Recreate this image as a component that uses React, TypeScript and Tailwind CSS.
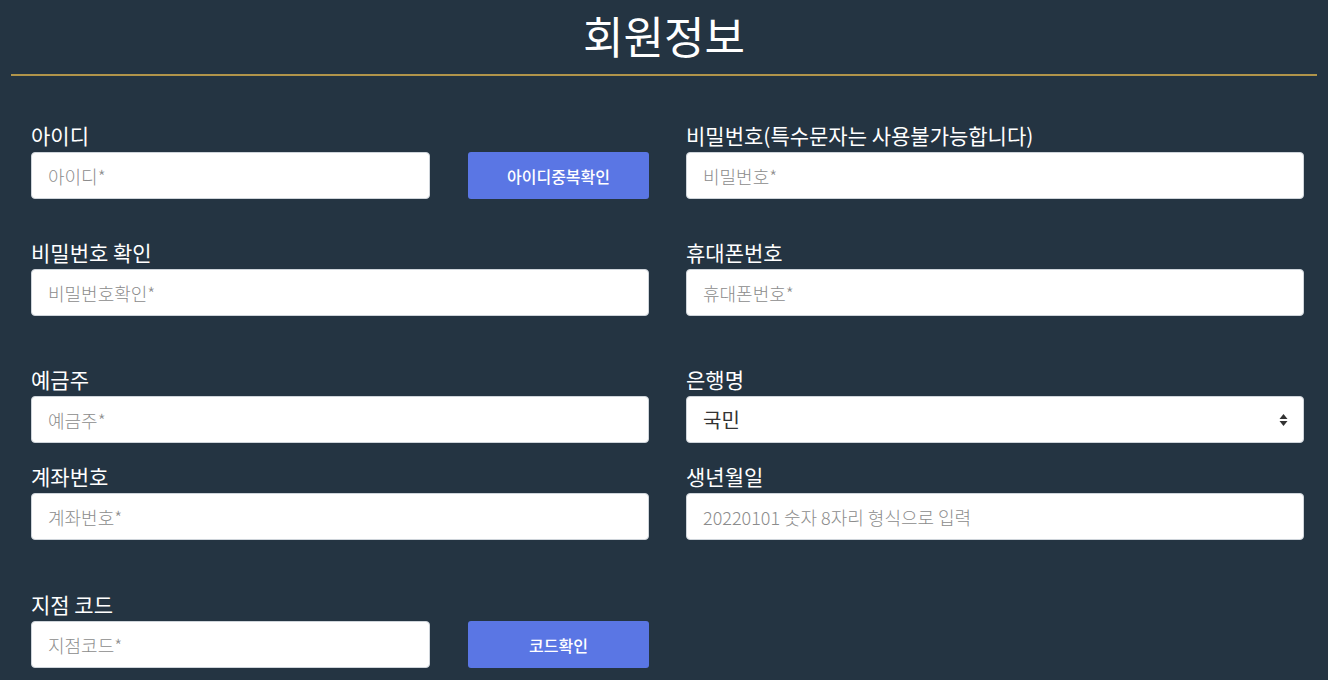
import { ReactNode } from 'react';

const font = { fontFamily: '"Noto Sans CJK KR", "Noto Sans", sans-serif' };

function Label({ children }: { children: ReactNode }) {
  return <div className="h-[24px] mb-[5px] text-[21px] leading-[24px] font-normal text-white">{children}</div>;
}

function Input({ placeholder, className = '' }: { placeholder: string; className?: string }) {
  return (
    <input
      placeholder={placeholder}
      className={`h-[47px] rounded-[4px] border border-[#ced4da] bg-white px-4 text-[18px] font-light text-[#495057] placeholder:text-[#8c8c8c] outline-none ${className}`}
    />
  );
}

function CheckButton({ children }: { children: ReactNode }) {
  return (
    <button className="h-[47px] w-[181px] rounded-[3px] bg-[#5a76e4] text-[16px] font-medium text-white">
      {children}
    </button>
  );
}

function Field({ label, placeholder }: { label: string; placeholder: string }) {
  return (
    <div className="flex flex-col">
      <Label>{label}</Label>
      <Input placeholder={placeholder} className="w-full" />
    </div>
  );
}

function App() {
  return (
    <div className="min-h-screen bg-[#243442]" style={font}>
      {/* Header */}
      <div className="h-[74px] flex items-center justify-center pb-[5px]">
        <h1 className="text-[44px] leading-none font-normal text-white">회원정보</h1>
      </div>
      <div className="mx-[11px] h-[2px] bg-[#b0944a]" />

      {/* Form */}
      <div className="pl-[31px] pr-[24px] grid grid-cols-[618px_618px] gap-x-[37px]">
        {/* Row 1 */}
        <div className="mt-[47px] flex flex-col">
          <Label>아이디</Label>
          <div className="flex gap-[38px]">
            <Input placeholder="아이디*" className="w-[399px]" />
            <CheckButton>아이디중복확인</CheckButton>
          </div>
        </div>
        <div className="mt-[47px]">
          <Field label="비밀번호(특수문자는 사용불가능합니다)" placeholder="비밀번호*" />
        </div>

        {/* Row 2 */}
        <div className="mt-[41px]">
          <Field label="비밀번호 확인" placeholder="비밀번호확인*" />
        </div>
        <div className="mt-[41px]">
          <Field label="휴대폰번호" placeholder="휴대폰번호*" />
        </div>

        {/* Row 3 */}
        <div className="mt-[51px]">
          <Field label="예금주" placeholder="예금주*" />
        </div>
        <div className="mt-[51px] flex flex-col">
          <Label>은행명</Label>
          <div className="relative h-[47px] rounded-[4px] border border-[#ced4da] bg-white px-4 flex items-center text-[20px] text-[#333]">
            국민
            <svg className="absolute right-[15px] top-1/2 -translate-y-1/2" width="9" height="14" viewBox="0 0 9 14">
              <path d="M4.5 1 L8.5 6 L0.5 6 Z" fill="#333" />
              <path d="M4.5 13 L8.5 8 L0.5 8 Z" fill="#333" />
            </svg>
          </div>
        </div>

        {/* Row 4 */}
        <div className="mt-[21px]">
          <Field label="계좌번호" placeholder="계좌번호*" />
        </div>
        <div className="mt-[21px]">
          <Field label="생년월일" placeholder="20220101 숫자 8자리 형식으로 입력" />
        </div>

        {/* Row 5 */}
        <div className="mt-[52px] flex flex-col">
          <Label>지점 코드</Label>
          <div className="flex gap-[38px]">
            <Input placeholder="지점코드*" className="w-[399px]" />
            <CheckButton>코드확인</CheckButton>
          </div>
        </div>
        <div />
      </div>
    </div>
  );
}

export default App;
